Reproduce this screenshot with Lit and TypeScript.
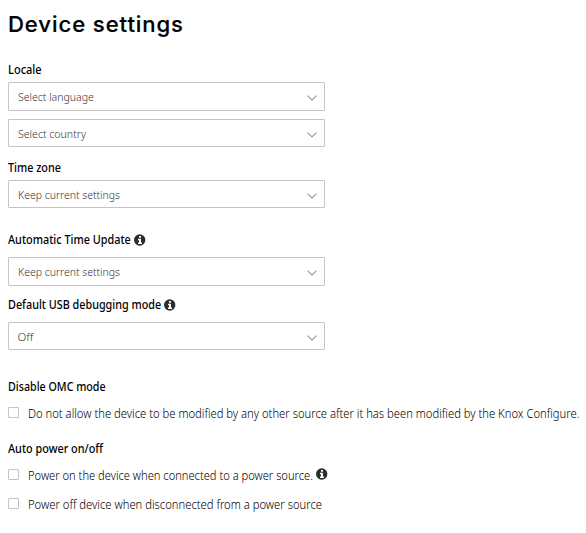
import { LitElement, html, css, svg } from "lit";
import { customElement, property, query } from "lit/decorators.js";

/* One line of text, set condensed or expanded to a given width. */
@customElement("fit-text")
class FitText extends LitElement {
  @property() text = "";
  @property({ type: Number }) width = 100;
  @query("span") line!: HTMLElement;
  static styles = css`
    :host { display: block; white-space: nowrap; flex: none; }
    span { display: inline-block; transform-origin: 0 50%; }
  `;
  render() {
    return html`<span>${this.text}</span>`;
  }
  updated() {
    this.style.width = `${this.width}px`;
    this.line.style.transform = `scaleX(${this.width / this.line.offsetWidth})`;
  }
}

@customElement("info-icon")
class InfoIcon extends LitElement {
  static styles = css`
    :host { display: block; width: 12px; height: 12px; flex: none; }
    svg { display: block; }
  `;
  render() {
    return html`<svg width="12" height="12" viewBox="0 0 12 12">
      ${svg`<circle cx="5.7" cy="6" r="5.7" fill="#2d2d2d"/>
      <path d="M5 2h2v1.7H5zM4 4.8h3v3.6h1V10H4V8.4h1V6.2H4z" fill="#fff"/>`}
    </svg>`;
  }
}

@customElement("select-box")
class SelectBox extends LitElement {
  @property() value = "";
  @property({ type: Number }) textWidth = 100;
  static styles = css`
    :host {
      display: flex; align-items: center; justify-content: space-between;
      box-sizing: border-box; width: 317px; height: 28px;
      border: 1px solid #c4c4c4; border-radius: 1px;
      padding: 1px 7.5px 0 8.5px; color: #333; background: #fff;
      font-size: 11.5px; line-height: 16px;
    }
    :host([tall]) { height: 29px; }
    svg { display: block; margin-top: 2px; }
  `;
  render() {
    return html`<fit-text .text=${this.value} .width=${this.textWidth}></fit-text>
      <svg width="10" height="6" viewBox="0 0 10 6"><path d="M.5 .6 5 5 9.5 .6" fill="none" stroke="#999" stroke-width="1.1"/></svg>`;
  }
}

@customElement("check-row")
class CheckRow extends LitElement {
  @property() label = "";
  @property({ type: Number }) textWidth = 100;
  static styles = css`
    :host { display: flex; align-items: center; height: 16px; font-size: 12.5px; line-height: 16px; color: #000; }
    .box { box-sizing: border-box; width: 11px; height: 11px; border: 1px solid #c4c4c4; border-radius: 1px; margin: -2px 8.5px 0 0; flex: none; }
    fit-text { margin-top: 1px; }
    ::slotted(info-icon) { margin: -3px 0 0 3.5px; }
  `;
  render() {
    return html`<span class="box"></span><fit-text .text=${this.label} .width=${this.textWidth}></fit-text><slot></slot>`;
  }
}

@customElement("app-root")
class AppRoot extends LitElement {
  static styles = css`
    :host {
      display: flex; flex-direction: column; box-sizing: border-box;
      height: 533px; padding: 8px 0 0 8px; background: #fff; overflow: hidden;
      font-family: "Noto Sans", sans-serif; font-weight: 300;
    }
    h1 { margin: 0; height: 32px; font: 500 22px/32px Inter, sans-serif; letter-spacing: 0.9px; color: #000; -webkit-text-stroke: 0.2px #000; }
    h2 { display: flex; align-items: center; margin: 0; height: 16px; font-size: 12px; line-height: 16px; font-weight: 500; color: #000; }
    h2 info-icon { margin-left: 3px; margin-top: -1px; }
    .locale { margin: 22px 0 4px; }
    .country { margin-top: 8px; }
    .zone { margin: 13px 0 4px; }
    .time { margin: 24px 0 9px; }
    .usb { margin: 11px 0 9px; }
    .omc { margin: 29px 0 10px; }
    .power { margin: 20px 0 10px; }
    .last { margin-top: 13px; }
  `;
  render() {
    return html`
      <h1><fit-text text="Device settings" width="176"></fit-text></h1>
      <h2 class="locale"><fit-text text="Locale" width="34"></fit-text></h2>
      <select-box tall value="Select language" .textWidth=${76}></select-box>
      <select-box class="country" value="Select country" .textWidth=${68}></select-box>
      <h2 class="zone"><fit-text text="Time zone" width="53"></fit-text></h2>
      <select-box value="Keep current settings" .textWidth=${102}></select-box>
      <h2 class="time"><fit-text text="Automatic Time Update" width="123"></fit-text><info-icon></info-icon></h2>
      <select-box tall value="Keep current settings" .textWidth=${102}></select-box>
      <h2 class="usb"><fit-text text="Default USB debugging mode" width="153"></fit-text><info-icon></info-icon></h2>
      <select-box value="Off" .textWidth=${16}></select-box>
      <h2 class="omc"><fit-text text="Disable OMC mode" width="98"></fit-text></h2>
      <check-row label="Do not allow the device to be modified by any other source after it has been modified by the Knox Configure." .textWidth=${551}></check-row>
      <h2 class="power"><fit-text text="Auto power on/off" width="95"></fit-text></h2>
      <check-row label="Power on the device when connected to a power source." .textWidth=${285}><info-icon></info-icon></check-row>
      <check-row class="last" label="Power off device when disconnected from a power source" .textWidth=${294}></check-row>
    `;
  }
}
